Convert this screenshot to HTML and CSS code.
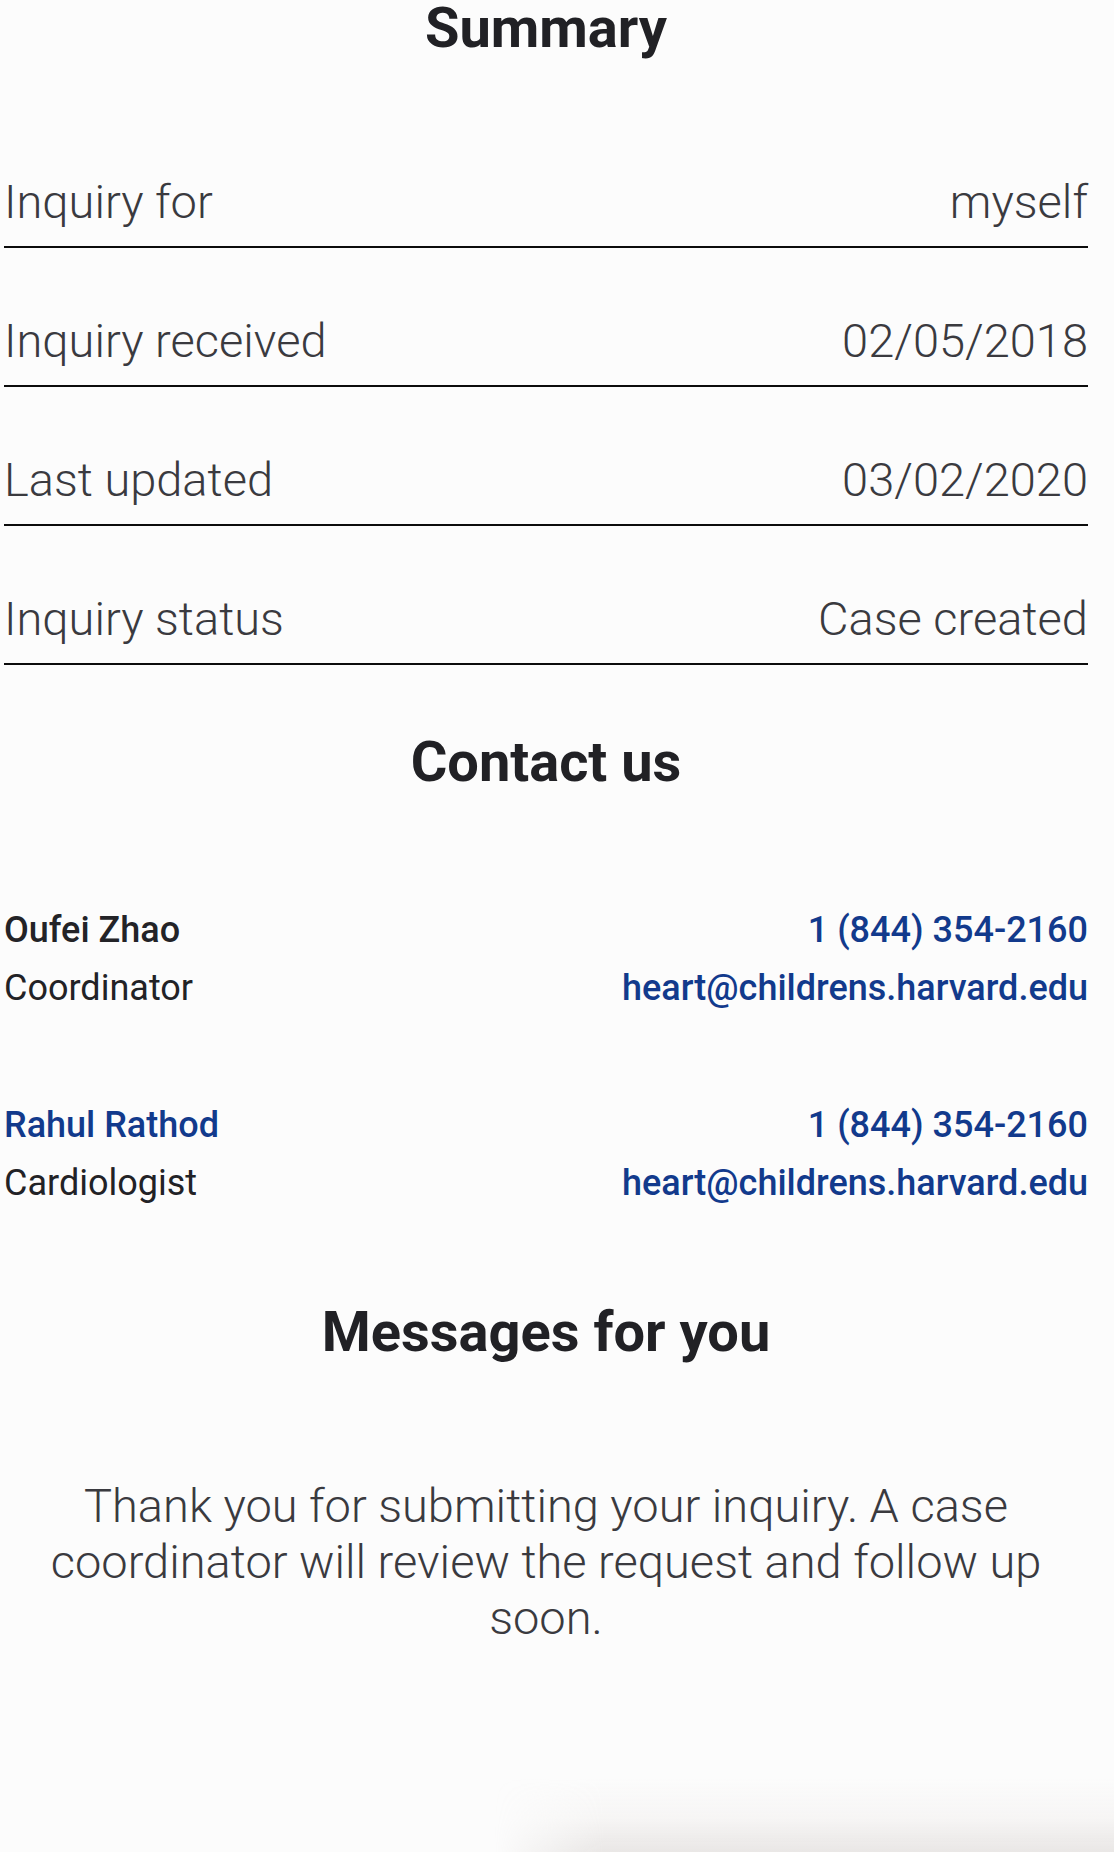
FILE: index.html
```html
<!DOCTYPE html>
<html lang="en">
<head>
<meta charset="utf-8">
<title>Summary</title>
<link rel="stylesheet" href="styles.css">
</head>
<body>
<main class="page">
  <section class="summary">
    <h2 class="heading">Summary</h2>
    <div class="rows">
      <div class="row"><span>Inquiry for</span><span>myself</span></div>
      <div class="row"><span>Inquiry received</span><span>02/05/2018</span></div>
      <div class="row"><span>Last updated</span><span>03/02/2020</span></div>
      <div class="row"><span>Inquiry status</span><span>Case created</span></div>
    </div>
  </section>

  <section class="contact">
    <h2 class="heading">Contact us</h2>
    <div class="contacts">
      <div class="person">
        <div class="who">
          <div class="name">Oufei Zhao</div>
          <div class="role">Coordinator</div>
        </div>
        <div class="reach">
          <a class="link" href="#">1 (844) 354-2160</a>
          <a class="link" href="#">heart@childrens.harvard.edu</a>
        </div>
      </div>
      <div class="person">
        <div class="who">
          <a class="name link" href="#">Rahul Rathod</a>
          <div class="role">Cardiologist</div>
        </div>
        <div class="reach">
          <a class="link" href="#">1 (844) 354-2160</a>
          <a class="link" href="#">heart@childrens.harvard.edu</a>
        </div>
      </div>
    </div>
  </section>

  <section class="messages">
    <h2 class="heading">Messages for you</h2>
    <p class="message">Thank you for submitting your inquiry. A case coordinator will review the request and follow up soon.</p>
  </section>
</main>
<div class="fade"></div>
</body>
</html>
```

FILE: styles.css
```css
html, body {
  margin: 0;
  padding: 0;
}
body {
  background: #fcfcfc;
  color: #222226;
  font-family: Roboto, "Liberation Sans", Arial, sans-serif;
  width: 1114px;
  min-height: 1852px;
  position: relative;
  overflow: hidden;
}
.page {
  margin: 0 26px 0 4px;
}
.heading {
  margin: 0;
  font-size: 56px;
  line-height: 56px;
  font-weight: 700;
  text-align: center;
  color: #212125;
}
.rows {
  display: flex;
  flex-direction: column;
  gap: 65px;
  padding-top: 118px;
}
.row {
  display: flex;
  justify-content: space-between;
  padding-bottom: 17px;
  border-bottom: 2px solid #0c0c0c;
  font-family: "Roboto Light", Roboto, "Liberation Sans", sans-serif;
  font-size: 47px;
  font-weight: 300;
  color: #3a3a3f;
}
.contact {
  margin-top: 69px;
}
.contacts {
  margin-top: 111px;
  display: flex;
  flex-direction: column;
  gap: 79px;
}
.person {
  display: flex;
  justify-content: space-between;
  font-size: 36px;
  line-height: 58px;
}
.who, .reach {
  display: flex;
  flex-direction: column;
}
.reach {
  align-items: flex-end;
}
.name {
  font-weight: 500;
  color: #232327;
}
.role {
  font-weight: 400;
  color: #222226;
}
.link {
  color: #123a8c;
  font-weight: 500;
  text-decoration: none;
}
.name.link {
  color: #123a8c;
}
.messages {
  margin-top: 92px;
}
.message {
  margin: 118px 0 0;
  text-align: center;
  font-family: "Roboto Light", Roboto, "Liberation Sans", sans-serif;
  font-size: 47px;
  line-height: 56px;
  font-weight: 300;
  color: #3a3a3f;
}
.fade {
  position: absolute;
  right: 0;
  bottom: 0;
  width: 620px;
  height: 75px;
  background: linear-gradient(to bottom, rgba(210, 200, 195, 0) 0%, rgba(210, 200, 195, 0.12) 55%, rgba(190, 182, 178, 0.3) 100%);
  -webkit-mask-image: linear-gradient(to right, transparent 0, #000 110px);
  mask-image: linear-gradient(to right, transparent 0, #000 110px);
}
```
